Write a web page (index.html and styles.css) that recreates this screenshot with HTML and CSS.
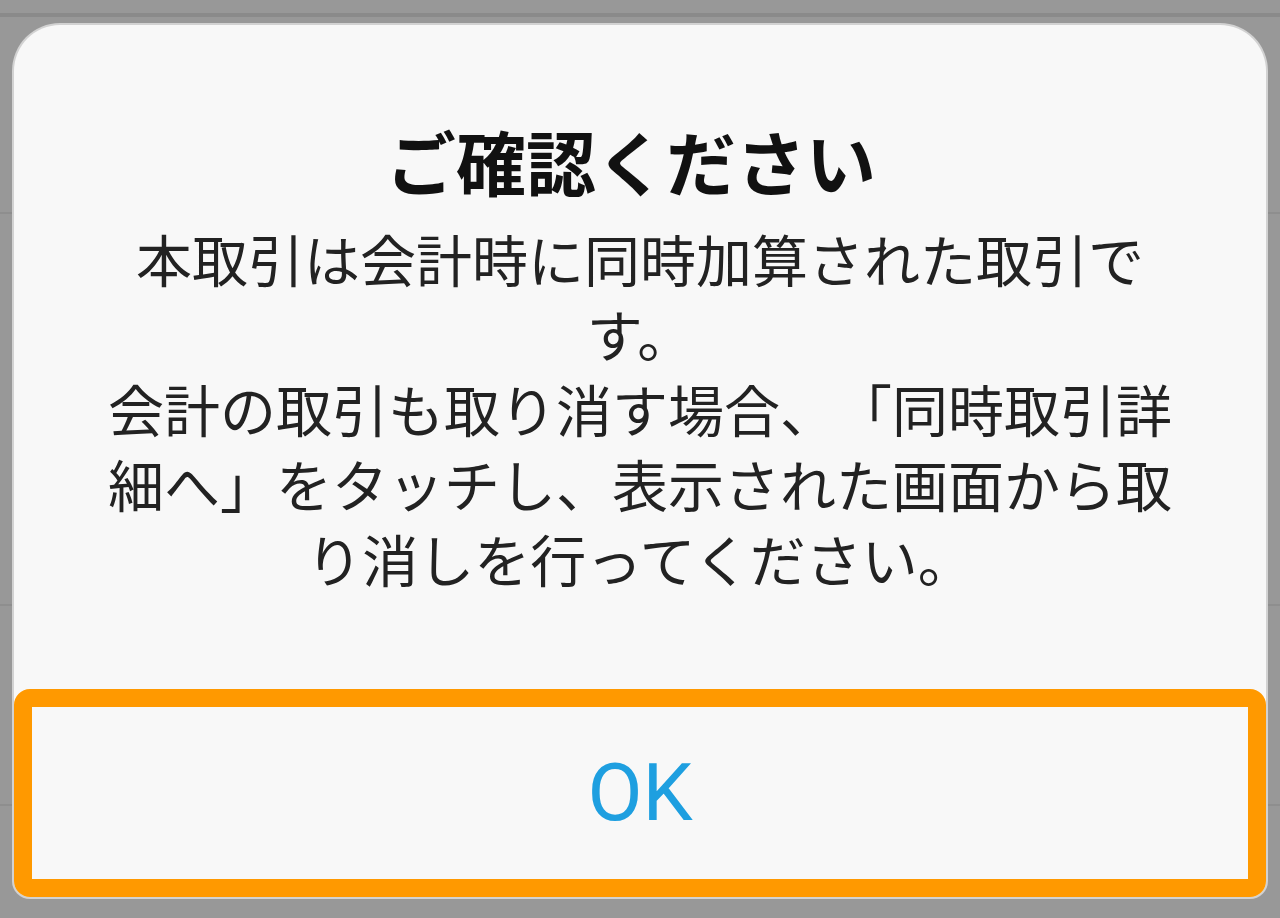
FILE: index.html
```html
<!DOCTYPE html>
<html lang="ja">
<head>
    <meta charset="UTF-8">
    <meta name="viewport" content="width=device-width, initial-scale=1.0">
    <title>ご確認ください</title>
    <link rel="stylesheet" href="styles.css">
</head>
<body>
    <div class="screen">
        <div class="appbar"></div>
        <ul class="rows">
            <li class="row row-first"></li>
            <li class="row row-second"></li>
            <li class="row row-third"></li>
        </ul>
    </div>

    <div class="dialog">
        <div class="dialog-body">
            <h2 class="dialog-title">ご確認ください</h2>
            <p class="dialog-message">本取引は会計時に同時加算された取引です。<br>会計の取引も取り消す場合、「同時取引詳細へ」をタッチし、表示された画面から取り消しを行ってください。</p>
        </div>
        <button class="dialog-ok" type="button">OK</button>
    </div>
</body>
</html>
```

FILE: styles.css
```css
html, body {
    margin: 0;
    height: 100%;
}
body {
    background-color: #989898;
    font-family: "Noto Sans CJK JP", "Noto Sans", sans-serif;
    overflow: hidden;
    position: relative;
}
.screen {
    height: 100%;
}
.appbar {
    height: 13px;
    border-bottom: 4px solid #8a8a8a;
}
.rows {
    list-style: none;
    margin: 0;
    padding: 0;
}
.row {
    border-bottom: 2px solid #8e8e8e;
}
.row-first {
    height: 195px;
}
.row-second {
    height: 390px;
}
.row-third {
    height: 198px;
}
.dialog {
    position: absolute;
    left: 14px;
    top: 25px;
    width: 1252px;
    height: 872px;
    display: flex;
    flex-direction: column;
    background-color: #f8f8f8;
    border-radius: 46px 46px 16px 16px;
    box-shadow: 0 0 0 2px #d2d2d2;
}
.dialog-body {
    flex: 1;
    padding-top: 96px;
    text-align: center;
}
.dialog-title {
    margin: 0;
    padding-right: 18px;
    font-size: 70px;
    line-height: 80px;
    font-weight: bold;
    color: #111;
}
.dialog-message {
    margin: 19px 0 0;
    padding: 0 86px;
    font-size: 56px;
    line-height: 75px;
    color: #222;
    line-break: strict;
    text-spacing-trim: space-all;
}
.dialog-ok {
    height: 208px;
    width: 100%;
    box-sizing: border-box;
    border: 18px solid #ff9900;
    border-radius: 16px;
    background-color: #f8f8f8;
    color: #1e9fe0;
    font-family: Roboto, "Liberation Sans", sans-serif;
    font-size: 80px;
    padding: 0;
    cursor: pointer;
}
```
